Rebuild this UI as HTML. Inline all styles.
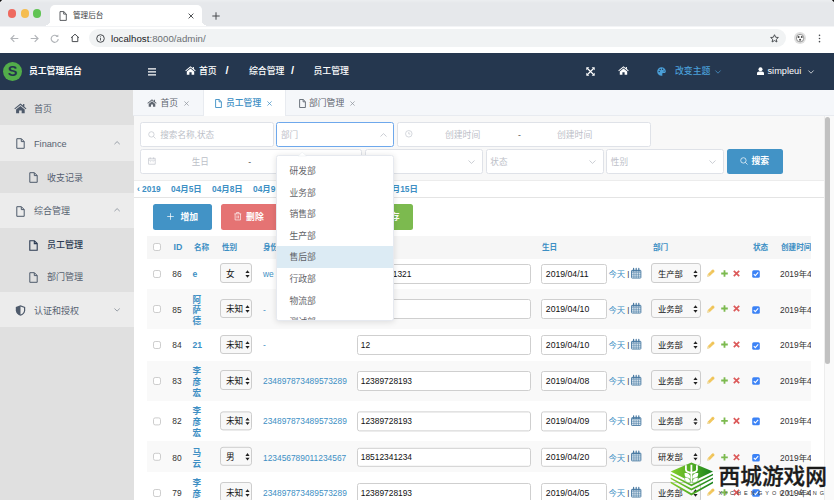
<!DOCTYPE html>
<html lang="zh-CN">
<head>
<meta charset="utf-8">
<title>管理后台</title>
<style>
*{box-sizing:border-box;margin:0;padding:0}
html,body{width:834px;height:500px;overflow:hidden;background:#fff}
body{position:relative;font-family:"Liberation Sans","Noto Sans CJK SC",sans-serif;font-size:9px;color:#333;-webkit-font-smoothing:antialiased}
.abs{position:absolute}
svg{display:block;position:absolute;overflow:visible}
/* ---------- browser chrome ---------- */
#tabbar{left:0;top:0;width:834px;height:26px;background:linear-gradient(#eceef0,#e6e8eb 3px);border-bottom:0}
#tab::before{content:"";position:absolute;left:-4px;bottom:0;width:4px;height:5px;background:radial-gradient(circle at 0 0,rgba(255,255,255,0) 3.800px,#fff 4.300px)}
#tab::after{content:"";position:absolute;right:-4px;bottom:0;width:4px;height:5px;background:radial-gradient(circle at 100% 0,rgba(255,255,255,0) 3.800px,#fff 4.300px)}
.tl{width:8.4px;height:8.4px;border-radius:50%;top:9.2px}
#tab{left:50px;top:5px;width:152px;height:21px;background:#fff;border-radius:5px 5px 0 0}
#tab .t{left:23px;top:5.1px;font-size:7.6px;color:#3c4043;line-height:12px;white-space:nowrap}
#toolbar{left:0;top:26px;width:834px;height:27px;background:#fff;border-top:1px solid #f3f4f6}
#url{left:89px;top:2.4px;width:696.8px;height:17.6px;border-radius:9px;background:#f1f3f4}
#url .t{left:22px;top:2.5px;font-size:9.65px;line-height:13px;color:#202124;white-space:nowrap;letter-spacing:0.05px}
#url .t span{color:#6b6f73}
/* ---------- app header ---------- */
#hdr{left:0;top:53px;width:834px;height:37px;background:#25374f;color:#fff}
#hdr .t{top:11.8px;line-height:12px;font-size:8.9px;font-weight:500;white-space:nowrap}
#logo{left:3px;top:8.5px;width:19px;height:19px;border-radius:50%;background:#52ad4a;color:#23354e;font-weight:bold;font-size:14.5px;line-height:19.5px;text-align:center}
/* ---------- sidebar ---------- */
#side{left:0;top:90px;z-index:1;width:134px;height:410px;background:#e0e0e0}
.mi{left:0;width:134px;color:#4b5563}
.mi .t{position:absolute;font-size:9px;line-height:12px;white-space:nowrap;color:#566170}
.lt{background:#ececec}
.mi .t{margin-top:.7px}
.mi svg{margin-top:.6px}
/* ---------- main ---------- */
#main{left:133px;top:90px;width:701px;height:410px;background:#fff}
#tabs{left:0;top:0;width:701px;height:26px;z-index:2;background:#f5f7fa;border-bottom:1px solid #e8ebf0}
.tb{top:0;height:26px;font-size:8.8px;line-height:12px;color:#5f6670;white-space:nowrap}
.tb .t{position:absolute;top:7.4px}
.tb svg{margin-top:.6px}
#panel{left:1px;top:25px;width:690px;height:385px;background:#fff}
#sbox{left:0;top:0;width:690px;height:66px;background:#f8f8f8;border-bottom:1px solid #ececec}
.inp{position:absolute;height:25px;border:1px solid #dfe2e8;border-radius:2.5px;background:#fff;color:#bcc0c8;font-size:8.6px;line-height:12px}
.inp .t{position:absolute;top:6px;white-space:nowrap}
.btn{position:absolute;height:25.4px;border-radius:2.5px;color:#fff;font-size:8.8px;font-weight:bold;line-height:12px;white-space:nowrap}
.btn .t{position:absolute;top:6.5px}
#dh{left:0;top:66px;width:690px;height:17px;border-bottom:1px solid #e4e4e4;color:#3d8fc4;font-weight:bold;font-size:8.4px;line-height:12px;white-space:nowrap}
#dh span{position:absolute;top:2.4px}
/* table */
#tbl{left:13px;top:122px;width:664px;height:263px;overflow:hidden}
.th{position:absolute;left:0;top:-.5px;width:664px;height:22.5px;padding-top:.5px;background:#f6f6f6;color:#3d8fc4;font-size:7.6px;font-weight:bold;line-height:12px}
.th span{position:absolute;top:5.5px;white-space:nowrap}
.tr{position:absolute;left:0;width:664px;font-size:8.6px;line-height:12px;color:#333}
.tr.alt{background:#f9f9f9}
.tr .c{position:absolute;white-space:nowrap;margin-top:.6px}
.tr .c.nm{margin-top:1.5px}
.tr .sel{margin-top:-.5px;margin-left:0}
.cb{position:absolute;left:6.3px;width:7.8px;height:7.8px;border:1px solid #cdcdcd;border-radius:2.2px;background:#fff}
.sel{position:absolute;height:19.5px;border:1px solid #cdcdcd;border-radius:3px;background:#f8f8f8;color:#111}
.sel .t{position:absolute;left:7px;top:3.5px;font-size:8.6px;line-height:12px;white-space:nowrap}
.ti{position:absolute;height:19.5px;border:1px solid #cfcfcf;border-radius:2.5px;background:#fff;color:#111}
.ti .t{position:absolute;left:3.8px;top:2.7px;font-size:8.4px;line-height:12px;white-space:nowrap}
.tr.s8>*{transform:translateY(.8px)}
.tr.s4>*{transform:translateY(.4px)}
.lk{color:#3d8fc4}
.nm{color:#3d8fc4;font-weight:bold;line-height:10.8px!important}
/* dropdown */
#dd{left:276px;top:155.2px;width:118px;height:166px;background:#fff;border:1px solid #e6e9ef;border-radius:2.5px;box-shadow:0 1px 6px rgba(0,0,0,.12);overflow:hidden}
#dd div{position:absolute;left:0;width:118px;height:21.6px;font-size:8.8px;line-height:21.6px;padding-top:1.4px;padding-left:12.5px;color:#5f6368;white-space:nowrap}
</style>
</head>
<body>
<!-- BROWSER -->
<div class="abs" style="left:0;top:0;width:3px;height:3px;z-index:5;background:radial-gradient(circle at 100% 100%,rgba(17,17,17,0) 2.600px,#111 3.100px)"></div>
<div class="abs" style="left:831px;top:0;width:3px;height:3px;z-index:5;background:radial-gradient(circle at 0 100%,rgba(17,17,17,0) 2.600px,#111 3.100px)"></div>
<div id="tabbar" class="abs">
  <div class="abs tl" style="left:8px;background:#ee6a5f"></div>
  <div class="abs tl" style="left:20.5px;background:#f5bd4f"></div>
  <div class="abs tl" style="left:33px;background:#61c454"></div>
  <div id="tab" class="abs">
    <svg style="left:8.5px;top:5.5px" width="8" height="10" viewBox="0 0 8 10"><path d="M1 .6h3.8L7.3 3v6.4H1z M4.7 .7v2.4h2.5" fill="none" stroke="#4a4d51" stroke-width=".9"/></svg>
    <div class="abs t">管理后台</div>
    <svg style="left:138px;top:8px" width="6" height="6" viewBox="0 0 6 6"><path d="M.6 .6l4.8 4.8M5.4 .6L.6 5.4" stroke="#3c4043" stroke-width=".9"/></svg>
  </div>
  <svg style="left:212px;top:11.5px" width="8" height="8" viewBox="0 0 8 8"><path d="M4 .3v7.4M.3 4h7.4" stroke="#46494d" stroke-width="1"/></svg>
</div>
<div id="toolbar" class="abs">
  <svg style="left:9.5px;top:6.8px" width="9" height="9" viewBox="0 0 9 9"><path d="M8.3 4.5H1.2M4.300 1.200L1 4.500l3.300 3.300" fill="none" stroke="#b2b5b9" stroke-width="1.200"/></svg>
  <svg style="left:29.5px;top:6.8px" width="9" height="9" viewBox="0 0 9 9"><path d="M.7 4.5h7.1M4.700 1.200L8 4.500 4.700 7.800" fill="none" stroke="#b2b5b9" stroke-width="1.200"/></svg>
  <svg style="left:50px;top:6.800px" width="9.600" height="9.600" viewBox="0 0 9 9"><path d="M7.700 4.600A3.300 3.300 0 1 1 6.700 2.100" fill="none" stroke="#b2b5b9" stroke-width="1.100"/><path d="M5.200 2.900h2.600V.4z" fill="#b2b5b9"/></svg>
  <svg style="left:70px;top:6.4px" width="10" height="10" viewBox="0 0 10 10"><path d="M1 4.8L5 1.2l4 3.6M2.2 4v4.6h5.6V4" fill="none" stroke="#4a4d51" stroke-width="1"/></svg>
  <div id="url" class="abs">
    <svg style="left:6.5px;top:4.4px" width="9" height="9" viewBox="0 0 9 9"><circle cx="4.500" cy="4.500" r="3.800" fill="none" stroke="#45484c" stroke-width="1"/><path d="M4.5 4v2.5M4.5 2.4v.9" stroke="#4a4d51" stroke-width=".9"/></svg>
    <div class="abs t">localhost<span>:8000/admin/</span></div>
    <svg style="left:680.6px;top:4.500px" width="9" height="9" viewBox="0 0 10 10"><path d="M5 .8l1.300 2.800 3 .3-2.300 2 .7 3L5 7.300 2.300 8.900l.7-3-2.300-2 3-.3z" fill="none" stroke="#45484c" stroke-width="1.050" stroke-linejoin="round"/></svg>
  </div>
  <div class="abs" style="left:793.6px;top:4.9px;width:12.4px;height:12.4px;border-radius:50%;background:#dfdfdf"></div>
  <svg style="left:795.7px;top:7px" width="8.200" height="8.200" viewBox="0 0 7 7"><circle cx="3.5" cy="3.5" r="3.2" fill="#fff" stroke="#555" stroke-width=".5"/><circle cx="2.2" cy="2.6" r=".9" fill="#444"/><circle cx="4.9" cy="2.6" r=".8" fill="#444"/><circle cx="3.5" cy="4.9" r=".9" fill="#444"/></svg>
  <svg style="left:818.4px;top:7px" width="3" height="9" viewBox="0 0 3 10"><circle cx="1.5" cy="1.5" r=".9" fill="#4a4d51"/><circle cx="1.5" cy="5" r=".9" fill="#4a4d51"/><circle cx="1.5" cy="8.5" r=".9" fill="#4a4d51"/></svg>
</div>

<!-- APP HEADER -->
<div id="hdr" class="abs">
  <div id="logo" class="abs">S</div>
  <div class="abs t" style="left:29px;font-weight:bold;font-size:8.8px">员工管理后台</div>
  <svg style="left:148px;top:14.5px" width="8" height="8" viewBox="0 0 8 8"><path d="M0 .9h8M0 3.900h8M0 6.900h8" stroke="#fff" stroke-width="1.400"/></svg>
  <svg style="left:185px;top:13px" width="11" height="9" viewBox="0 0 11 9"><path d="M5.5 .3L.3 4.6l.6.7L5.5 1.6l4.6 3.7.6-.7L8.9 3.100V.9H7.800v1.300z" fill="#fff"/><path d="M5.500 2.600L1.800 5.600V8.700H4.400V6.300H6.600V8.700H9.200V5.600z" fill="#fff"/></svg>
  <div class="abs t" style="left:199px">首页</div>
  <div class="abs t" style="left:225.5px;font-size:11px;top:11px;font-weight:bold">/</div>
  <div class="abs t" style="left:249px">综合管理</div>
  <div class="abs t" style="left:291px;font-size:11px;top:11px;font-weight:bold">/</div>
  <div class="abs t" style="left:313.5px">员工管理</div>
  <svg style="left:586.4px;top:14px" width="9" height="9" viewBox="0 0 9 9"><path d="M1.500 1.500L7.500 7.500M7.500 1.500L1.500 7.500" stroke="#fff" stroke-width="1.200"/><path d="M.3 .3h3L.3 3.300zM8.700 .3v3L5.700 .3zM.3 8.700v-3l3 3zM8.700 8.700h-3l3-3z" fill="#fff"/></svg>
  <svg style="left:618px;top:13px" width="11" height="9" viewBox="0 0 11 9"><path d="M5.5 .3L.3 4.6l.6.7L5.5 1.6l4.6 3.7.6-.7L8.9 3.100V.9H7.800v1.300z" fill="#fff"/><path d="M5.500 2.600L1.800 5.600V8.700H4.400V6.300H6.600V8.700H9.200V5.600z" fill="#fff"/></svg>
  <svg style="left:656.5px;top:13.5px" width="9" height="9" viewBox="0 0 9 9"><path d="M4.500 .2A4.300 4.300 0 1 0 4.500 8.800C5.400 8.800 5.700 8 5.300 7.400 4.900 6.700 5.300 5.900 6.200 5.900H7.300C8.200 5.900 8.800 5.300 8.800 4.400 8.800 2 6.900 .2 4.500 .2z" fill="#4a9fd8"/><circle cx="2.200" cy="4.500" r=".7" fill="#23354e"/><circle cx="3.200" cy="2.500" r=".7" fill="#23354e"/><circle cx="5.600" cy="2.300" r=".7" fill="#23354e"/><circle cx="7.100" cy="4" r=".6" fill="#23354e"/></svg>
  <div class="abs t" style="left:675px;color:#4a9fd8">改变主题</div>
  <svg style="left:714.5px;top:16.500px" width="6" height="4" viewBox="0 0 6 4"><path d="M.4 .5L3 3.200 5.600 .5" fill="none" stroke="#4a9fd8" stroke-width=".7"/></svg>
  <svg style="left:756.500px;top:14px" width="7" height="8" viewBox="0 0 7 8"><circle cx="3.500" cy="2.200" r="2" fill="#fff"/><path d="M0 8V6.500C0 5.300 1 4.600 2 4.600H5C6 4.600 7 5.300 7 6.500V8z" fill="#fff"/></svg>
  <div class="abs t" style="left:767.5px;font-size:9.2px">simpleui</div>
  <svg style="left:807.500px;top:16.500px" width="6" height="4" viewBox="0 0 6 4"><path d="M.4 .5L3 3.200 5.600 .5" fill="none" stroke="#fff" stroke-width=".7"/></svg>
</div>

<!-- SIDEBAR -->
<div id="side" class="abs">
  <!-- 首页 -->
  <div class="abs mi" style="top:0;height:35px">
    <svg style="left:13.800px;top:12.600px" width="12.800" height="10.600" viewBox="0 0 11 9"><path d="M5.5 .3L.3 4.6l.6.7L5.5 1.600l4.600 3.700.6-.7L8.900 3.100V.9H7.800v1.300z" fill="#4e5a6b"/><path d="M5.500 2.600L1.800 5.600V8.700H4.400V6.300H6.600V8.700H9.200V5.600z" fill="#4e5a6b"/></svg>
    <div class="t" style="left:34px;top:12px">首页</div>
  </div>
  <!-- Finance -->
  <div class="abs mi lt" style="top:35px;height:36px">
    <svg style="left:15.500px;top:12.500px" width="9" height="11" viewBox="0 0 9 11"><path d="M.8 .7H5.400L8.200 3.500V10.300H.8z M5.300 .8V3.600H8.100" fill="none" stroke="#4e5a6b" stroke-width="1"/></svg>
    <div class="t" style="left:34px;top:12px;font-size:9.200px">Finance</div>
    <svg style="left:113.800px;top:15.400px" width="6.200" height="3.700" viewBox="0 0 7 4"><path d="M.5 3.500L3.500 .6 6.500 3.500" fill="none" stroke="#8d949e" stroke-width="1"/></svg>
  </div>
  <div class="abs mi" style="top:71px;height:32px">
    <svg style="left:28.500px;top:10.500px" width="9" height="11" viewBox="0 0 9 11"><path d="M.8 .7H5.400L8.200 3.500V10.300H.8z M5.300 .8V3.600H8.100" fill="none" stroke="#4e5a6b" stroke-width="1"/></svg>
    <div class="t" style="left:47px;top:10px">收支记录</div>
  </div>
  <!-- 综合管理 -->
  <div class="abs mi lt" style="top:103px;height:35px">
    <svg style="left:15.500px;top:12px" width="9" height="11" viewBox="0 0 9 11"><path d="M.8 .7H5.400L8.200 3.500V10.300H.8z M5.300 .8V3.600H8.100" fill="none" stroke="#4e5a6b" stroke-width="1"/></svg>
    <div class="t" style="left:34px;top:11.500px">综合管理</div>
    <svg style="left:113.800px;top:14.900px" width="6.200" height="3.700" viewBox="0 0 7 4"><path d="M.5 3.500L3.500 .6 6.500 3.500" fill="none" stroke="#8d949e" stroke-width="1"/></svg>
  </div>
  <div class="abs mi" style="top:138px;height:32px">
    <svg style="left:28.500px;top:11px" width="9" height="11" viewBox="0 0 9 11"><path d="M.8 .7H5.400L8.200 3.500V10.300H.8z M5.300 .8V3.600H8.100" fill="none" stroke="#2b3a52" stroke-width="1.100"/></svg>
    <div class="t" style="left:47px;top:10.500px;color:#2b3a52;font-weight:500">员工管理</div>
  </div>
  <div class="abs mi" style="top:170px;height:32px">
    <svg style="left:28.500px;top:11px" width="9" height="11" viewBox="0 0 9 11"><path d="M.8 .7H5.400L8.200 3.500V10.300H.8z M5.300 .8V3.600H8.100" fill="none" stroke="#4e5a6b" stroke-width="1"/></svg>
    <div class="t" style="left:47px;top:10.500px">部门管理</div>
  </div>
  <!-- 认证和授权 -->
  <div class="abs mi lt" style="top:202px;height:35px">
    <svg style="left:14.500px;top:12.500px" width="11" height="11" viewBox="0 0 11 11"><path d="M5.500 .3L.8 2V5.200C.8 8 2.900 10 5.500 10.700 8.100 10 10.200 8 10.200 5.200V2z" fill="#4e5a6b"/><path d="M5.500 1.600V9.500C7.500 8.800 9 7.300 9 5.200V2.800z" fill="#ececec"/></svg>
    <div class="t" style="left:34px;top:12px">认证和授权</div>
    <svg style="left:113.800px;top:15.400px" width="6.200" height="3.700" viewBox="0 0 7 4"><path d="M.5 .5L3.500 3.400 6.500 .5" fill="none" stroke="#8d949e" stroke-width="1"/></svg>
  </div>
</div>

<!-- MAIN -->
<div id="main" class="abs">
<div id="tabs" class="abs">
<div class="abs tb" style="left:1px;width:69px"><svg style="left:13px;top:8.5px" width="10" height="8" viewBox="0 0 11 9"><path d="M5.500 .3L.3 4.600l.6.7L5.500 1.600l4.600 3.700.6-.7L8.900 3.100V.9H7.800v1.300z" fill="#5f6670"/><path d="M5.500 2.600L1.800 5.600V8.700H4.400V6.300H6.600V8.700H9.200V5.600z" fill="#5f6670"/></svg><span class="t" style="left:26.500px">首页</span><svg style="left:49.5px;top:10.5px" width="5" height="5" viewBox="0 0 5 5"><path d="M.4 .4L4.600 4.600M4.600 .4L.4 4.600" stroke="#8b9099" stroke-width=".7"/></svg></div>
<div class="abs tb" style="left:70px;width:83px;background:#fff;height:26px;color:#3d8fc4;font-weight:500;border-left:1px solid #e8ebf0;border-right:1px solid #e8ebf0"><svg style="left:11px;top:8px" width="7" height="9" viewBox="0 0 7 9"><path d="M.6 .5H4.200L6.400 2.700V8.500H.6z M4.100 .6V2.800H6.300" fill="none" stroke="#3d8fc4" stroke-width=".9"/></svg><span class="t" style="left:22px">员工管理</span><svg style="left:63px;top:10.5px" width="5" height="5" viewBox="0 0 5 5"><path d="M.4 .4L4.600 4.600M4.600 .4L.4 4.600" stroke="#3d8fc4" stroke-width=".7"/></svg></div>
<div class="abs tb" style="left:153px;width:84px"><svg style="left:12.5px;top:8px" width="7" height="9" viewBox="0 0 7 9"><path d="M.6 .5H4.200L6.400 2.700V8.500H.6z M4.100 .6V2.800H6.300" fill="none" stroke="#5f6670" stroke-width=".9"/></svg><span class="t" style="left:23px">部门管理</span><svg style="left:63.5px;top:10.5px" width="5" height="5" viewBox="0 0 5 5"><path d="M.4 .4L4.600 4.600M4.600 .4L.4 4.600" stroke="#8b9099" stroke-width=".7"/></svg></div>
</div>
<div id="panel" class="abs">
<div id="sbox" class="abs">
<div class="inp" style="left:6.2px;top:6.5px;width:133.8px"><svg style="left:6.5px;top:8.5px" width="8" height="8" viewBox="0 0 8 8"><circle cx="3.400" cy="3.400" r="2.700" fill="none" stroke="#c0c4cc" stroke-width=".7"/><path d="M5.400 5.400L7.500 7.500" stroke="#c0c4cc" stroke-width=".7"/></svg><span class="t" style="left:19px">搜索名称,状态</span></div>
<div class="inp" style="left:142px;top:6.5px;width:118px;border-color:#6ea8ec"><span class="t" style="left:4px">部门</span><svg style="left:103px;top:10px" width="7" height="4" viewBox="0 0 7 4"><path d="M.5 3.500L3.500 .6 6.500 3.500" fill="none" stroke="#b4b9c2" stroke-width=".7"/></svg></div>
<div class="inp" style="left:263px;top:6.5px;width:254px"><svg style="left:6.800px;top:7.500px" width="7.600" height="7.600" viewBox="0 0 7 7"><circle cx="3.500" cy="3.500" r="3" fill="none" stroke="#c0c4cc" stroke-width=".6"/><path d="M3.500 1.800V3.700H4.900" fill="none" stroke="#c0c4cc" stroke-width=".6"/></svg><span class="t" style="left:47px;font-size:8.8px">创建时间</span><span class="t" style="left:120px;color:#555">-</span><span class="t" style="left:159px;font-size:8.8px">创建时间</span></div>
<div class="inp" style="left:6.2px;top:33.5px;width:222.300px"><svg style="left:7px;top:7.900px" width="7.800" height="7.800" viewBox="0 0 7 7"><path d="M.5 1.200H6.500V6.500H.5z M.5 2.800H6.500 M2 .3V1.800 M5 .3V1.800 M2 4.200H2.800M4.200 4.200H5" fill="none" stroke="#c0c4cc" stroke-width=".6"/></svg><span class="t" style="left:50.500px">生日</span><span class="t" style="left:107px;color:#555">-</span><span class="t" style="left:160px">生日</span></div>
<div class="inp" style="left:231px;top:33.5px;width:118px"><span class="t" style="left:5px">部门</span><svg style="left:102px;top:10.5px" width="7" height="4" viewBox="0 0 7 4"><path d="M.5 .5L3.500 3.400 6.500 .5" fill="none" stroke="#b4b9c2" stroke-width=".7"/></svg></div>
<div class="inp" style="left:351.5px;top:33.5px;width:118px"><span class="t" style="left:3.800px">状态</span><svg style="left:102px;top:10.5px" width="7" height="4" viewBox="0 0 7 4"><path d="M.5 .5L3.500 3.400 6.500 .5" fill="none" stroke="#b4b9c2" stroke-width=".7"/></svg></div>
<div class="inp" style="left:472px;top:33.5px;width:117.500px"><span class="t" style="left:3.800px">性别</span><svg style="left:102px;top:10.5px" width="7" height="4" viewBox="0 0 7 4"><path d="M.5 .5L3.500 3.400 6.500 .5" fill="none" stroke="#b4b9c2" stroke-width=".7"/></svg></div>
<div class="btn" style="left:592.5px;top:33.5px;width:56.500px;background:#4293c6"><svg style="left:13px;top:8.5px" width="8" height="8" viewBox="0 0 8 8"><circle cx="3.400" cy="3.400" r="2.700" fill="none" stroke="#fff" stroke-width=".7"/><path d="M5.400 5.400L7.500 7.500" stroke="#fff" stroke-width=".7"/></svg><span class="t" style="left:25px">搜索</span></div>
</div>
<div id="dh" class="abs"><span style="left:3px">‹ 2019</span>
<span style="left:37px">04月5日</span>
<span style="left:78px">04月8日</span>
<span style="left:119px">04月9日</span>
<span style="left:160px">04月10日</span>
<span style="left:206px">04月11日</span>
<span style="left:248.5px">04月15日</span>
</div>
<div class="btn" style="left:19px;top:89.2px;width:59px;background:#4293c6"><svg style="left:13.500px;top:9px" width="7" height="7" viewBox="0 0 7 7"><path d="M3.500 .2V6.800M.2 3.500H6.800" stroke="#fff" stroke-width=".7"/></svg><span class="t" style="left:27.500px">增加</span></div>
<div class="btn" style="left:86.6px;top:89.2px;width:59px;background:#e57373"><svg style="left:13.8px;top:8.300px" width="7.600" height="8.600" viewBox="0 0 7 8"><path d="M.3 1.700H6.700M2.300 1.500V.5H4.700V1.500M1 1.800V7.400H6V1.800M2.800 3.300V5.900M4.200 3.300V5.900" fill="none" stroke="#fff" stroke-width=".6"/></svg><span class="t" style="left:25.500px">删除</span></div>
<div class="btn" style="left:153.5px;top:89.2px;width:59px;background:#e6a23c"><span class="t" style="left:25.500px">导出</span></div>
<div class="btn" style="left:220px;top:89.2px;width:59px;background:#7cba4f"><span class="t" style="left:28px">保存</span></div>
<div id="tbl" class="abs" style="left:13px;top:121px;width:664px;height:263.5px"><div style="position:absolute;left:0;top:.5px;width:664px;height:270px">
<div class="th"><div class="cb" style="top:7px"></div>
<span style="left:26.5px;font-size:8.8px;margin-top:-.6px">ID</span>
<span style="left:47px">名称</span>
<span style="left:75px">性别</span>
<span style="left:116px">身份证</span>
<span style="left:211px">手机</span>
<span style="left:395px">生日</span>
<span style="left:506px">部门</span>
<span style="left:606px">状态</span>
<span style="left:634px">创建时间</span>
</div>
<div class="tr" style="top:22.0px;height:30.3px">
<div class="cb" style="top:11.4px"></div>
<div class="c" style="left:25.3px;top:9.15px;font-size:8.4px">86</div>
<div class="c nm" style="left:45.4px;top:9.85px;font-size:8.6px"><i style="font-style:normal;position:relative;top:-.9px">e</i></div>
<div class="sel" style="left:73.4px;top:5.40px;width:32px"><span class="t" style="left:4.6px">女</span><svg style="left:23.5px;top:5.5px" width="5" height="8" viewBox="0 0 5 8"><path d="M2.500 .3L4.600 3.100H.4z M2.500 7.700L4.600 4.900H.4z" fill="#222"/></svg></div>
<div class="c lk" style="left:116.0px;top:9.15px;font-size:8.4px">we</div>
<div class="ti" style="left:210.0px;top:5.65px;width:174px"><span class="t" style="left:2.800px">12312311321</span></div>
<div class="ti" style="left:394.0px;top:5.65px;width:65.500px"><span class="t" style="font-size:8.7px">2019/04/11</span></div>
<div class="c lk" style="left:461.4px;top:9.15px;font-size:8.4px">今天</div>
<div class="c" style="left:480.3px;top:9.15px;font-size:8px;color:#222">|</div>
<svg style="left:484.4px;top:9.25px" width="10.400" height="10.600" viewBox="0 0 10.400 10.600"><rect x=".5" y="2.300" width="9.400" height="7.800" rx=".6" fill="#e3edf5" stroke="#4a7aa3" stroke-width=".9"/><path d="M.5 4.400H9.900M.5 6.300H9.900M.5 8.200H9.900M2.900 4.400V10.100M5.200 4.400V10.100M7.500 4.400V10.100" stroke="#4a7aa3" stroke-width=".55"/><path d="M1 2.800H9.400" stroke="#4a7aa3" stroke-width="1.100"/><path d="M2.600 .4V3M5.200 .4V3M7.800 .4V3" stroke="#4a7aa3" stroke-width="1.200" stroke-linecap="round"/></svg>
<div class="sel" style="left:504.4px;top:5.40px;width:49.500px"><span class="t" style="left:5.6px;font-size:8.3px">生产部</span><svg style="left:41px;top:5.5px" width="5" height="8" viewBox="0 0 5 8"><path d="M2.500 .3L4.600 3.100H.4z M2.500 7.700L4.600 4.900H.4z" fill="#222"/></svg></div>
<svg style="left:560.0px;top:10.85px" width="8" height="8" viewBox="0 0 8 8"><path d="M.3 7.700L.9 5.100 5.300 .7C5.700 .3 6.200 .3 6.600 .7L7.300 1.400C7.700 1.800 7.700 2.300 7.300 2.700L2.900 7.100z" fill="#f2c860"/><path d="M.3 7.700L.9 5.100 2.900 7.100z" fill="#ecdcae"/><path d="M4.700 1.300L6.700 3.300" stroke="#e0b040" stroke-width=".5"/></svg>
<svg style="left:573.6px;top:11.65px" width="7" height="7" viewBox="0 0 7 7"><path d="M3.500 .2V6.800M.2 3.500H6.800" stroke="#7cba4f" stroke-width="1.800"/></svg>
<svg style="left:586.4px;top:11.65px" width="7" height="7" viewBox="0 0 7 7"><path d="M.8 .8L6.200 6.200M6.200 .8L.8 6.200" stroke="#dc5a5a" stroke-width="1.700"/></svg>
<svg style="left:605px;top:11.85px" width="8" height="8" viewBox="0 0 8 8"><rect x=".2" y=".2" width="7.600" height="7.600" rx="1.500" fill="#3b82f6"/><path d="M1.800 4.100L3.300 5.600 6.200 2.400" fill="none" stroke="#fff" stroke-width="1.100"/></svg>
<div class="c" style="left:633.0px;top:9.15px;font-size:8.4px">2019年4月11日 14:20</div>
</div>
<div class="tr alt" style="top:52.3px;height:40.3px">
<div class="cb" style="top:16.4px"></div>
<div class="c" style="left:25.3px;top:14.15px;font-size:8.4px">85</div>
<div class="c nm" style="left:45.4px;top:4.25px;font-size:8.6px">阿<br>萨<br>德</div>
<div class="sel" style="left:73.4px;top:10.40px;width:32px"><span class="t" style="left:4.5px">未知</span><svg style="left:23.5px;top:5.5px" width="5" height="8" viewBox="0 0 5 8"><path d="M2.500 .3L4.600 3.100H.4z M2.500 7.700L4.600 4.900H.4z" fill="#222"/></svg></div>
<div class="c lk" style="left:116.0px;top:14.15px;font-size:8.4px">-</div>
<div class="ti" style="left:210.0px;top:10.65px;width:174px"><span class="t" style="left:2.800px"></span></div>
<div class="ti" style="left:394.0px;top:10.65px;width:65.500px"><span class="t" style="font-size:8.7px">2019/04/10</span></div>
<div class="c lk" style="left:461.4px;top:14.15px;font-size:8.4px">今天</div>
<div class="c" style="left:480.3px;top:14.15px;font-size:8px;color:#222">|</div>
<svg style="left:484.4px;top:14.25px" width="10.400" height="10.600" viewBox="0 0 10.400 10.600"><rect x=".5" y="2.300" width="9.400" height="7.800" rx=".6" fill="#e3edf5" stroke="#4a7aa3" stroke-width=".9"/><path d="M.5 4.400H9.900M.5 6.300H9.900M.5 8.200H9.900M2.900 4.400V10.100M5.200 4.400V10.100M7.500 4.400V10.100" stroke="#4a7aa3" stroke-width=".55"/><path d="M1 2.800H9.400" stroke="#4a7aa3" stroke-width="1.100"/><path d="M2.600 .4V3M5.200 .4V3M7.800 .4V3" stroke="#4a7aa3" stroke-width="1.200" stroke-linecap="round"/></svg>
<div class="sel" style="left:504.4px;top:10.40px;width:49.500px"><span class="t" style="left:5.6px;font-size:8.3px">业务部</span><svg style="left:41px;top:5.5px" width="5" height="8" viewBox="0 0 5 8"><path d="M2.500 .3L4.600 3.100H.4z M2.500 7.700L4.600 4.900H.4z" fill="#222"/></svg></div>
<svg style="left:560.0px;top:15.85px" width="8" height="8" viewBox="0 0 8 8"><path d="M.3 7.700L.9 5.100 5.300 .7C5.700 .3 6.200 .3 6.600 .7L7.300 1.400C7.700 1.800 7.700 2.300 7.300 2.700L2.900 7.100z" fill="#f2c860"/><path d="M.3 7.700L.9 5.100 2.900 7.100z" fill="#ecdcae"/><path d="M4.700 1.300L6.700 3.300" stroke="#e0b040" stroke-width=".5"/></svg>
<svg style="left:573.6px;top:16.65px" width="7" height="7" viewBox="0 0 7 7"><path d="M3.500 .2V6.800M.2 3.500H6.800" stroke="#7cba4f" stroke-width="1.800"/></svg>
<svg style="left:586.4px;top:16.65px" width="7" height="7" viewBox="0 0 7 7"><path d="M.8 .8L6.200 6.200M6.200 .8L.8 6.200" stroke="#dc5a5a" stroke-width="1.700"/></svg>
<svg style="left:605px;top:16.85px" width="8" height="8" viewBox="0 0 8 8"><rect x=".2" y=".2" width="7.600" height="7.600" rx="1.500" fill="#3b82f6"/><path d="M1.800 4.100L3.300 5.600 6.200 2.400" fill="none" stroke="#fff" stroke-width="1.100"/></svg>
<div class="c" style="left:633.0px;top:14.15px;font-size:8.4px">2019年4月11日 14:20</div>
</div>
<div class="tr" style="top:92.6px;height:31.5px">
<div class="cb" style="top:12.0px"></div>
<div class="c" style="left:25.3px;top:9.75px;font-size:8.4px">84</div>
<div class="c nm" style="left:45.4px;top:10.45px;font-size:8.6px"><i style="font-style:normal;position:relative;top:-.9px">21</i></div>
<div class="sel" style="left:73.4px;top:6.00px;width:32px"><span class="t" style="left:4.5px">未知</span><svg style="left:23.5px;top:5.5px" width="5" height="8" viewBox="0 0 5 8"><path d="M2.500 .3L4.600 3.100H.4z M2.500 7.700L4.600 4.900H.4z" fill="#222"/></svg></div>
<div class="c lk" style="left:116.0px;top:9.75px;font-size:8.4px">-</div>
<div class="ti" style="left:210.0px;top:6.25px;width:174px"><span class="t" style="left:2.800px">12</span></div>
<div class="ti" style="left:394.0px;top:6.25px;width:65.500px"><span class="t" style="font-size:8.7px">2019/04/10</span></div>
<div class="c lk" style="left:461.4px;top:9.75px;font-size:8.4px">今天</div>
<div class="c" style="left:480.3px;top:9.75px;font-size:8px;color:#222">|</div>
<svg style="left:484.4px;top:9.85px" width="10.400" height="10.600" viewBox="0 0 10.400 10.600"><rect x=".5" y="2.300" width="9.400" height="7.800" rx=".6" fill="#e3edf5" stroke="#4a7aa3" stroke-width=".9"/><path d="M.5 4.400H9.900M.5 6.300H9.900M.5 8.200H9.900M2.900 4.400V10.100M5.200 4.400V10.100M7.500 4.400V10.100" stroke="#4a7aa3" stroke-width=".55"/><path d="M1 2.800H9.400" stroke="#4a7aa3" stroke-width="1.100"/><path d="M2.600 .4V3M5.200 .4V3M7.800 .4V3" stroke="#4a7aa3" stroke-width="1.200" stroke-linecap="round"/></svg>
<div class="sel" style="left:504.4px;top:6.00px;width:49.500px"><span class="t" style="left:5.6px;font-size:8.3px">业务部</span><svg style="left:41px;top:5.5px" width="5" height="8" viewBox="0 0 5 8"><path d="M2.500 .3L4.600 3.100H.4z M2.500 7.700L4.600 4.900H.4z" fill="#222"/></svg></div>
<svg style="left:560.0px;top:11.45px" width="8" height="8" viewBox="0 0 8 8"><path d="M.3 7.700L.9 5.100 5.300 .7C5.700 .3 6.200 .3 6.600 .7L7.300 1.400C7.700 1.800 7.700 2.300 7.300 2.700L2.900 7.100z" fill="#f2c860"/><path d="M.3 7.700L.9 5.100 2.900 7.100z" fill="#ecdcae"/><path d="M4.700 1.300L6.700 3.300" stroke="#e0b040" stroke-width=".5"/></svg>
<svg style="left:573.6px;top:12.25px" width="7" height="7" viewBox="0 0 7 7"><path d="M3.500 .2V6.800M.2 3.500H6.800" stroke="#7cba4f" stroke-width="1.800"/></svg>
<svg style="left:586.4px;top:12.25px" width="7" height="7" viewBox="0 0 7 7"><path d="M.8 .8L6.200 6.200M6.200 .8L.8 6.200" stroke="#dc5a5a" stroke-width="1.700"/></svg>
<svg style="left:605px;top:12.45px" width="8" height="8" viewBox="0 0 8 8"><rect x=".2" y=".2" width="7.600" height="7.600" rx="1.500" fill="#3b82f6"/><path d="M1.800 4.100L3.300 5.600 6.200 2.400" fill="none" stroke="#fff" stroke-width="1.100"/></svg>
<div class="c" style="left:633.0px;top:9.75px;font-size:8.4px">2019年4月11日 14:20</div>
</div>
<div class="tr alt" style="top:124.1px;height:40.0px">
<div class="cb" style="top:16.25px"></div>
<div class="c" style="left:25.3px;top:14.00px;font-size:8.4px">83</div>
<div class="c nm" style="left:45.4px;top:4.10px;font-size:8.6px">李<br>彦<br>宏</div>
<div class="sel" style="left:73.4px;top:10.25px;width:32px"><span class="t" style="left:4.5px">未知</span><svg style="left:23.5px;top:5.5px" width="5" height="8" viewBox="0 0 5 8"><path d="M2.500 .3L4.600 3.100H.4z M2.500 7.700L4.600 4.900H.4z" fill="#222"/></svg></div>
<div class="c lk" style="left:116.0px;top:14.00px;font-size:8.4px">234897873489573289</div>
<div class="ti" style="left:210.0px;top:10.50px;width:174px"><span class="t" style="left:2.800px">12389728193</span></div>
<div class="ti" style="left:394.0px;top:10.50px;width:65.500px"><span class="t" style="font-size:8.7px">2019/04/08</span></div>
<div class="c lk" style="left:461.4px;top:14.00px;font-size:8.4px">今天</div>
<div class="c" style="left:480.3px;top:14.00px;font-size:8px;color:#222">|</div>
<svg style="left:484.4px;top:14.1px" width="10.400" height="10.600" viewBox="0 0 10.400 10.600"><rect x=".5" y="2.300" width="9.400" height="7.800" rx=".6" fill="#e3edf5" stroke="#4a7aa3" stroke-width=".9"/><path d="M.5 4.400H9.900M.5 6.300H9.900M.5 8.200H9.900M2.900 4.400V10.100M5.200 4.400V10.100M7.500 4.400V10.100" stroke="#4a7aa3" stroke-width=".55"/><path d="M1 2.800H9.400" stroke="#4a7aa3" stroke-width="1.100"/><path d="M2.600 .4V3M5.200 .4V3M7.800 .4V3" stroke="#4a7aa3" stroke-width="1.200" stroke-linecap="round"/></svg>
<div class="sel" style="left:504.4px;top:10.25px;width:49.500px"><span class="t" style="left:5.6px;font-size:8.3px">业务部</span><svg style="left:41px;top:5.5px" width="5" height="8" viewBox="0 0 5 8"><path d="M2.500 .3L4.600 3.100H.4z M2.500 7.700L4.600 4.900H.4z" fill="#222"/></svg></div>
<svg style="left:560.0px;top:15.7px" width="8" height="8" viewBox="0 0 8 8"><path d="M.3 7.700L.9 5.100 5.300 .7C5.700 .3 6.200 .3 6.600 .7L7.300 1.400C7.700 1.800 7.700 2.300 7.300 2.700L2.900 7.100z" fill="#f2c860"/><path d="M.3 7.700L.9 5.100 2.900 7.100z" fill="#ecdcae"/><path d="M4.700 1.300L6.700 3.300" stroke="#e0b040" stroke-width=".5"/></svg>
<svg style="left:573.6px;top:16.5px" width="7" height="7" viewBox="0 0 7 7"><path d="M3.500 .2V6.800M.2 3.500H6.800" stroke="#7cba4f" stroke-width="1.800"/></svg>
<svg style="left:586.4px;top:16.5px" width="7" height="7" viewBox="0 0 7 7"><path d="M.8 .8L6.200 6.200M6.200 .8L.8 6.200" stroke="#dc5a5a" stroke-width="1.700"/></svg>
<svg style="left:605px;top:16.7px" width="8" height="8" viewBox="0 0 8 8"><rect x=".2" y=".2" width="7.600" height="7.600" rx="1.500" fill="#3b82f6"/><path d="M1.800 4.100L3.300 5.600 6.200 2.400" fill="none" stroke="#fff" stroke-width="1.100"/></svg>
<div class="c" style="left:633.0px;top:14.00px;font-size:8.4px">2019年4月11日 14:20</div>
</div>
<div class="tr s4" style="top:164.1px;height:40.4px">
<div class="cb" style="top:16.45px"></div>
<div class="c" style="left:25.3px;top:14.20px;font-size:8.4px">82</div>
<div class="c nm" style="left:45.4px;top:4.30px;font-size:8.6px">李<br>彦<br>宏</div>
<div class="sel" style="left:73.4px;top:10.45px;width:32px"><span class="t" style="left:4.5px">未知</span><svg style="left:23.5px;top:5.5px" width="5" height="8" viewBox="0 0 5 8"><path d="M2.500 .3L4.600 3.100H.4z M2.500 7.700L4.600 4.900H.4z" fill="#222"/></svg></div>
<div class="c lk" style="left:116.0px;top:14.20px;font-size:8.4px">234897873489573289</div>
<div class="ti" style="left:210.0px;top:10.70px;width:174px"><span class="t" style="left:2.800px">12389728193</span></div>
<div class="ti" style="left:394.0px;top:10.70px;width:65.500px"><span class="t" style="font-size:8.7px">2019/04/09</span></div>
<div class="c lk" style="left:461.4px;top:14.20px;font-size:8.4px">今天</div>
<div class="c" style="left:480.3px;top:14.20px;font-size:8px;color:#222">|</div>
<svg style="left:484.4px;top:14.3px" width="10.400" height="10.600" viewBox="0 0 10.400 10.600"><rect x=".5" y="2.300" width="9.400" height="7.800" rx=".6" fill="#e3edf5" stroke="#4a7aa3" stroke-width=".9"/><path d="M.5 4.400H9.900M.5 6.300H9.900M.5 8.200H9.900M2.900 4.400V10.100M5.200 4.400V10.100M7.500 4.400V10.100" stroke="#4a7aa3" stroke-width=".55"/><path d="M1 2.800H9.400" stroke="#4a7aa3" stroke-width="1.100"/><path d="M2.600 .4V3M5.200 .4V3M7.800 .4V3" stroke="#4a7aa3" stroke-width="1.200" stroke-linecap="round"/></svg>
<div class="sel" style="left:504.4px;top:10.45px;width:49.500px"><span class="t" style="left:5.6px;font-size:8.3px">业务部</span><svg style="left:41px;top:5.5px" width="5" height="8" viewBox="0 0 5 8"><path d="M2.500 .3L4.600 3.100H.4z M2.500 7.700L4.600 4.900H.4z" fill="#222"/></svg></div>
<svg style="left:560.0px;top:15.9px" width="8" height="8" viewBox="0 0 8 8"><path d="M.3 7.700L.9 5.100 5.300 .7C5.700 .3 6.200 .3 6.600 .7L7.300 1.400C7.700 1.800 7.700 2.300 7.300 2.700L2.900 7.100z" fill="#f2c860"/><path d="M.3 7.700L.9 5.100 2.900 7.100z" fill="#ecdcae"/><path d="M4.700 1.300L6.700 3.300" stroke="#e0b040" stroke-width=".5"/></svg>
<svg style="left:573.6px;top:16.7px" width="7" height="7" viewBox="0 0 7 7"><path d="M3.500 .2V6.800M.2 3.500H6.800" stroke="#7cba4f" stroke-width="1.800"/></svg>
<svg style="left:586.4px;top:16.7px" width="7" height="7" viewBox="0 0 7 7"><path d="M.8 .8L6.200 6.200M6.200 .8L.8 6.200" stroke="#dc5a5a" stroke-width="1.700"/></svg>
<svg style="left:605px;top:16.9px" width="8" height="8" viewBox="0 0 8 8"><rect x=".2" y=".2" width="7.600" height="7.600" rx="1.500" fill="#3b82f6"/><path d="M1.800 4.100L3.300 5.600 6.200 2.400" fill="none" stroke="#fff" stroke-width="1.100"/></svg>
<div class="c" style="left:633.0px;top:14.20px;font-size:8.4px">2019年4月11日 14:20</div>
</div>
<div class="tr alt s8" style="top:204.5px;height:31.4px">
<div class="cb" style="top:11.35px"></div>
<div class="c" style="left:25.3px;top:9.10px;font-size:8.4px">80</div>
<div class="c nm" style="left:45.4px;top:4.50px;font-size:8.6px">马<br>云</div>
<div class="sel" style="left:73.4px;top:5.35px;width:32px"><span class="t" style="left:4.6px">男</span><svg style="left:23.5px;top:5.5px" width="5" height="8" viewBox="0 0 5 8"><path d="M2.500 .3L4.600 3.100H.4z M2.500 7.700L4.600 4.900H.4z" fill="#222"/></svg></div>
<div class="c lk" style="left:116.0px;top:9.10px;font-size:8.4px">123456789011234567</div>
<div class="ti" style="left:210.0px;top:5.60px;width:174px"><span class="t" style="left:2.800px">18512341234</span></div>
<div class="ti" style="left:394.0px;top:5.60px;width:65.500px"><span class="t" style="font-size:8.7px">2019/04/20</span></div>
<div class="c lk" style="left:461.4px;top:9.10px;font-size:8.4px">今天</div>
<div class="c" style="left:480.3px;top:9.10px;font-size:8px;color:#222">|</div>
<svg style="left:484.4px;top:9.2px" width="10.400" height="10.600" viewBox="0 0 10.400 10.600"><rect x=".5" y="2.300" width="9.400" height="7.800" rx=".6" fill="#e3edf5" stroke="#4a7aa3" stroke-width=".9"/><path d="M.5 4.400H9.900M.5 6.300H9.900M.5 8.200H9.900M2.900 4.400V10.100M5.200 4.400V10.100M7.500 4.400V10.100" stroke="#4a7aa3" stroke-width=".55"/><path d="M1 2.800H9.400" stroke="#4a7aa3" stroke-width="1.100"/><path d="M2.600 .4V3M5.200 .4V3M7.800 .4V3" stroke="#4a7aa3" stroke-width="1.200" stroke-linecap="round"/></svg>
<div class="sel" style="left:504.4px;top:5.35px;width:49.500px"><span class="t" style="left:5.6px;font-size:8.3px">研发部</span><svg style="left:41px;top:5.5px" width="5" height="8" viewBox="0 0 5 8"><path d="M2.500 .3L4.600 3.100H.4z M2.500 7.700L4.600 4.900H.4z" fill="#222"/></svg></div>
<svg style="left:560.0px;top:10.8px" width="8" height="8" viewBox="0 0 8 8"><path d="M.3 7.700L.9 5.100 5.300 .7C5.700 .3 6.200 .3 6.600 .7L7.300 1.400C7.700 1.800 7.700 2.300 7.300 2.700L2.900 7.100z" fill="#f2c860"/><path d="M.3 7.700L.9 5.100 2.900 7.100z" fill="#ecdcae"/><path d="M4.700 1.300L6.700 3.300" stroke="#e0b040" stroke-width=".5"/></svg>
<svg style="left:573.6px;top:11.6px" width="7" height="7" viewBox="0 0 7 7"><path d="M3.500 .2V6.800M.2 3.500H6.800" stroke="#7cba4f" stroke-width="1.800"/></svg>
<svg style="left:586.4px;top:11.6px" width="7" height="7" viewBox="0 0 7 7"><path d="M.8 .8L6.200 6.200M6.200 .8L.8 6.200" stroke="#dc5a5a" stroke-width="1.700"/></svg>
<svg style="left:605px;top:11.8px" width="8" height="8" viewBox="0 0 8 8"><rect x=".2" y=".2" width="7.600" height="7.600" rx="1.500" fill="#3b82f6"/><path d="M1.800 4.100L3.300 5.600 6.200 2.400" fill="none" stroke="#fff" stroke-width="1.100"/></svg>
<div class="c" style="left:633.0px;top:9.10px;font-size:8.4px">2019年4月11日 14:20</div>
</div>
<div class="tr" style="top:235.9px;height:40.3px">
<div class="cb" style="top:16.4px"></div>
<div class="c" style="left:25.3px;top:14.15px;font-size:8.4px">79</div>
<div class="c nm" style="left:45.4px;top:4.25px;font-size:8.6px">李<br>彦<br>宏</div>
<div class="sel" style="left:73.4px;top:10.40px;width:32px"><span class="t" style="left:4.5px">未知</span><svg style="left:23.5px;top:5.5px" width="5" height="8" viewBox="0 0 5 8"><path d="M2.500 .3L4.600 3.100H.4z M2.500 7.700L4.600 4.900H.4z" fill="#222"/></svg></div>
<div class="c lk" style="left:116.0px;top:14.15px;font-size:8.4px">234897873489573289</div>
<div class="ti" style="left:210.0px;top:10.65px;width:174px"><span class="t" style="left:2.800px">12389728193</span></div>
<div class="ti" style="left:394.0px;top:10.65px;width:65.500px"><span class="t" style="font-size:8.7px">2019/04/05</span></div>
<div class="c lk" style="left:461.4px;top:14.15px;font-size:8.4px">今天</div>
<div class="c" style="left:480.3px;top:14.15px;font-size:8px;color:#222">|</div>
<svg style="left:484.4px;top:14.25px" width="10.400" height="10.600" viewBox="0 0 10.400 10.600"><rect x=".5" y="2.300" width="9.400" height="7.800" rx=".6" fill="#e3edf5" stroke="#4a7aa3" stroke-width=".9"/><path d="M.5 4.400H9.900M.5 6.300H9.900M.5 8.200H9.900M2.900 4.400V10.100M5.200 4.400V10.100M7.500 4.400V10.100" stroke="#4a7aa3" stroke-width=".55"/><path d="M1 2.800H9.400" stroke="#4a7aa3" stroke-width="1.100"/><path d="M2.600 .4V3M5.200 .4V3M7.800 .4V3" stroke="#4a7aa3" stroke-width="1.200" stroke-linecap="round"/></svg>
<div class="sel" style="left:504.4px;top:10.40px;width:49.500px"><span class="t" style="left:5.6px;font-size:8.3px">业务部</span><svg style="left:41px;top:5.5px" width="5" height="8" viewBox="0 0 5 8"><path d="M2.500 .3L4.600 3.100H.4z M2.500 7.700L4.600 4.900H.4z" fill="#222"/></svg></div>
<svg style="left:560.0px;top:15.85px" width="8" height="8" viewBox="0 0 8 8"><path d="M.3 7.700L.9 5.100 5.300 .7C5.700 .3 6.200 .3 6.600 .7L7.300 1.400C7.700 1.800 7.700 2.300 7.300 2.700L2.900 7.100z" fill="#f2c860"/><path d="M.3 7.700L.9 5.100 2.900 7.100z" fill="#ecdcae"/><path d="M4.700 1.300L6.700 3.300" stroke="#e0b040" stroke-width=".5"/></svg>
<svg style="left:573.6px;top:16.65px" width="7" height="7" viewBox="0 0 7 7"><path d="M3.500 .2V6.800M.2 3.500H6.800" stroke="#7cba4f" stroke-width="1.800"/></svg>
<svg style="left:586.4px;top:16.65px" width="7" height="7" viewBox="0 0 7 7"><path d="M.8 .8L6.200 6.200M6.200 .8L.8 6.200" stroke="#dc5a5a" stroke-width="1.700"/></svg>
<svg style="left:605px;top:16.85px" width="8" height="8" viewBox="0 0 8 8"><rect x=".2" y=".2" width="7.600" height="7.600" rx="1.500" fill="#3b82f6"/><path d="M1.800 4.100L3.300 5.600 6.200 2.400" fill="none" stroke="#fff" stroke-width="1.100"/></svg>
<div class="c" style="left:633.0px;top:14.15px;font-size:8.4px">2019年4月11日 14:20</div>
</div>
</div>
</div>
</div>
<div class="abs" style="left:691px;top:25px;width:10px;height:385px;background:#fafafa;border-left:1px solid #ededed"></div>
<div class="abs" style="left:692.2px;top:27px;width:5px;height:246.500px;border-radius:3px;background:#c1c1c1"></div>
</div>

<div id="dd" class="abs">
<div style="top:3.4px">研发部</div>
<div style="top:25.0px">业务部</div>
<div style="top:46.6px">销售部</div>
<div style="top:68.2px">生产部</div>
<div style="top:89.8px;background:#dcebf4">售后部</div>
<div style="top:111.4px">行政部</div>
<div style="top:133.0px">物流部</div>
<div style="top:154.6px">测试部</div>
</div>
<svg style="left:298px;top:151.800px" width="8.500" height="4" viewBox="0 0 10 5"><path d="M0 5L5 .3 10 5z" fill="#fff" stroke="#e6e9ef" stroke-width=".6"/></svg>
<!-- WATERMARK -->
<svg style="left:670px;top:462px" width="44" height="35" viewBox="0 0 44 35">
  <defs><linearGradient id="g1" x1="0" y1="0" x2="1" y2="0"><stop offset="0" stop-color="#86cf2c"/><stop offset=".55" stop-color="#4aa823"/><stop offset="1" stop-color="#17801c"/></linearGradient></defs>
  <path d="M.7 9.600L21.400 .6 43 9.600 21.400 20z" fill="url(#g1)"/>
  <path d="M.7 11.800L21.400 22.300 43 11.800 43 13.200 21.400 24.200 .7 13.200z" fill="url(#g1)"/>
  <path d="M.7 15.400L21.400 26.400 43 15.400 43 17 21.400 28.400 .7 17z" fill="url(#g1)"/>
  <path d="M.7 19.400L21.400 31.200 43 19.400 43 21.200 21.400 33.400 .7 21.200z" fill="url(#g1)"/>
  <path d="M15.900 3.200V8M21.400 2.700V19.800M26.900 3.200V8" fill="none" stroke="#fff" stroke-width="1.800"/>
  <path d="M15.900 7.600C15.900 10 18 10.600 21.400 10.900 24.800 10.600 26.900 10 26.900 7.600" fill="none" stroke="#fff" stroke-width="1.800"/>
  <path d="M20.400 16.400C16 16.800 14.400 14.600 14.600 11 18.800 10.800 20.600 12.800 20.400 16.400zM22.400 16.400C26.800 16.800 28.400 14.600 28.200 11 24 10.800 22.200 12.800 22.400 16.400z" fill="#fff"/>
  <path d="M20.400 20.600C16 21 14.400 18.800 14.600 15.400 18.800 15.200 20.600 17.200 20.400 20.600zM22.400 20.600C26.800 21 28.400 18.800 28.200 15.400 24 15.200 22.200 17.200 22.400 20.600z" fill="#fff" stroke="#3f9f22" stroke-width=".4"/>
</svg>
<div class="abs" style="left:718.5px;top:461.5px;font-family:'Liberation Sans','Noto Sans CJK SC',sans-serif;font-weight:500;font-size:21.7px;line-height:30px;-webkit-text-stroke:.35px #1b1b1b;color:#1b1b1b;white-space:nowrap;letter-spacing:0px">西城游戏网</div>
<div class="abs" style="left:718.5px;top:489.7px;font-size:5.500px;line-height:7px;color:#333;white-space:nowrap;letter-spacing:3.1px">XICHENGYOUXIWANG</div>
</body>
</html>
